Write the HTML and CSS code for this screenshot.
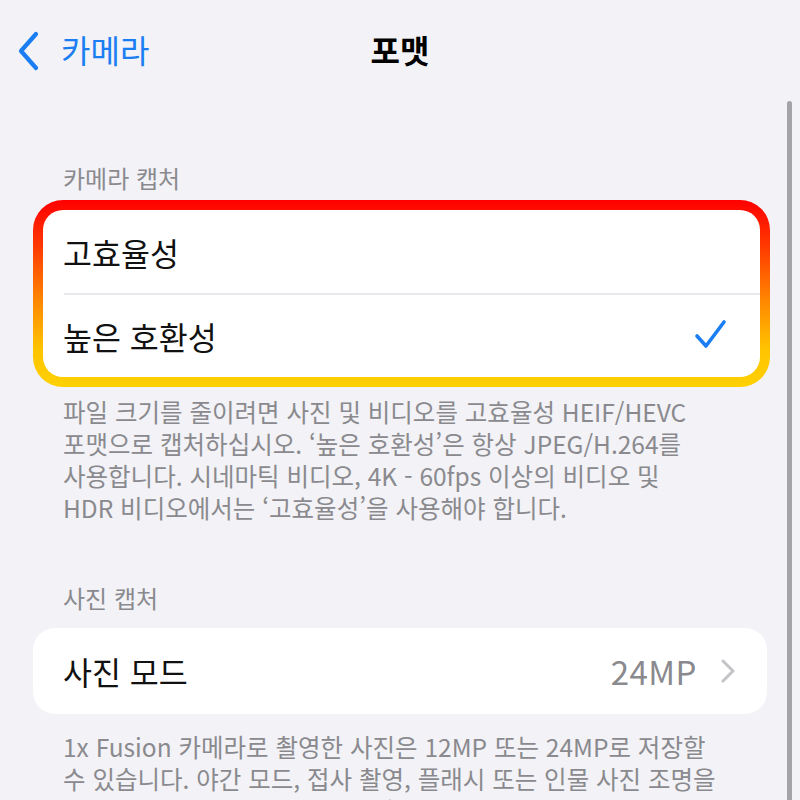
FILE: index.html
```html
<!DOCTYPE html>
<html lang="ko">
<head>
<meta charset="utf-8">
<link rel="stylesheet" href="styles.css">
</head>
<body>
<div class="screen">
  <header class="nav">
    <div class="back">
      <svg class="back-icon" width="22" height="40" viewBox="0 0 22 40"><path d="M18 3 L3 20 L18 37" fill="none" stroke="#1a7df2" stroke-width="4.2" stroke-linecap="round" stroke-linejoin="round"/></svg>
      <span class="back-label">카메라</span>
    </div>
    <div class="title">포맷</div>
    <div></div>
  </header>

  <div class="section-header first">카메라 캡처</div>
  <div class="highlight">
    <div class="group">
      <div class="row">고효율성</div>
      <div class="divider"></div>
      <div class="row">
        <span>높은 호환성</span>
        <svg class="check" width="34" height="34" viewBox="0 0 34 34"><path d="M3 18 L12 28 L30 4" fill="none" stroke="#1a7df2" stroke-width="3.6" stroke-linecap="round" stroke-linejoin="round"/></svg>
      </div>
    </div>
  </div>
  <div class="footer first-footer">
    <div>파일 크기를 줄이려면 사진 및 비디오를 고효율성 HEIF/HEVC</div>
    <div>포맷으로 캡처하십시오. ‘높은 호환성’은 항상 JPEG/H.264를</div>
    <div>사용합니다. 시네마틱 비디오, 4K - 60fps 이상의 비디오 및</div>
    <div>HDR 비디오에서는 ‘고효율성’을 사용해야 합니다.</div>
  </div>

  <div class="section-header second">사진 캡처</div>
  <div class="card">
    <span>사진 모드</span>
    <span class="detail">
      <span class="value">24MP</span>
      <svg class="chev" width="14" height="24" viewBox="0 0 14 24"><path d="M2 2 L12 12 L2 22" fill="none" stroke="#c4c4c8" stroke-width="3" stroke-linecap="round" stroke-linejoin="round"/></svg>
    </span>
  </div>
  <div class="footer second-footer">
    <div>1x Fusion 카메라로 촬영한 사진은 12MP 또는 24MP로 저장할</div>
    <div>수 있습니다. 야간 모드, 접사 촬영, 플래시 또는 인물 사진 조명을</div>
    <div>이용한 사진은 12MP로 저장됩니다.</div>
  </div>

  <div class="scrollbar"></div>
</div>
</body>
</html>
```

FILE: styles.css
```css
html, body {
  margin: 0;
  padding: 0;
  background: #f2f2f7;
}
body {
  font-family: "Noto Sans CJK KR", "Noto Sans", sans-serif;
  color: #111;
}
.screen {
  position: relative;
  width: 800px;
  height: 800px;
  overflow: hidden;
}
.nav {
  height: 100px;
  display: grid;
  grid-template-columns: 1fr auto 1fr;
  align-items: center;
}
.back {
  display: flex;
  align-items: center;
  padding-left: 18px;
  margin-top: 2px;
}
.back-icon {
  display: block;
}
.back-label {
  margin-left: 21px;
  font-size: 32px;
  line-height: 40px;
  color: #1a7df2;
  margin-top: -4px;
}
.title {
  font-size: 32px;
  font-weight: 700;
  line-height: 40px;
  color: #000;
  margin-top: -2px;
}
.section-header {
  padding-left: 63px;
  font-size: 24px;
  line-height: 30px;
  height: 30px;
  color: #8a8a8e;
}
.section-header.first {
  margin-top: 63px;
}
.section-header.second {
  margin-top: 59px;
}
.highlight {
  margin: 7px 0 0 33px;
  width: 717px;
  padding: 10px;
  border-radius: 30px;
  background: linear-gradient(to bottom, #ff0000 0%, #ff3a00 25%, #ff8a00 55%, #ffc400 80%, #ffd000 100%);
}
.group {
  background: #fff;
  border-radius: 20px;
  overflow: hidden;
}
.row {
  height: 82px;
  display: flex;
  align-items: center;
  justify-content: space-between;
  padding: 0 32px 0 20px;
  font-size: 31.5px;
  color: #111;
}
.row:first-child {
  height: 83px;
}
.divider {
  height: 2px;
  margin-left: 21px;
  background: #e8e8ed;
}
.check {
  display: block;
  margin-top: -2px;
}
.footer {
  padding-left: 63px;
  font-size: 24.5px;
  line-height: 32px;
  color: #8a8a8e;
  white-space: nowrap;
}
.first-footer {
  margin-top: 9px;
}
.second-footer {
  margin-top: 17px;
}
.card {
  margin: 15px 0 0 33px;
  width: 672px;
  height: 86px;
  padding: 0 32px 0 30px;
  background: #fff;
  border-radius: 22px;
  display: flex;
  align-items: center;
  justify-content: space-between;
  font-size: 31.5px;
  color: #111;
}
.detail {
  display: flex;
  align-items: center;
}
.value {
  color: #8a8a8e;
  font-size: 33px;
  letter-spacing: 0.5px;
}
.chev {
  display: block;
  margin-left: 24px;
}
.scrollbar {
  position: absolute;
  right: 8px;
  top: 101px;
  bottom: 0;
  width: 5px;
  border-radius: 3px 3px 0 0;
  background: #a4a4a8;
}
```
